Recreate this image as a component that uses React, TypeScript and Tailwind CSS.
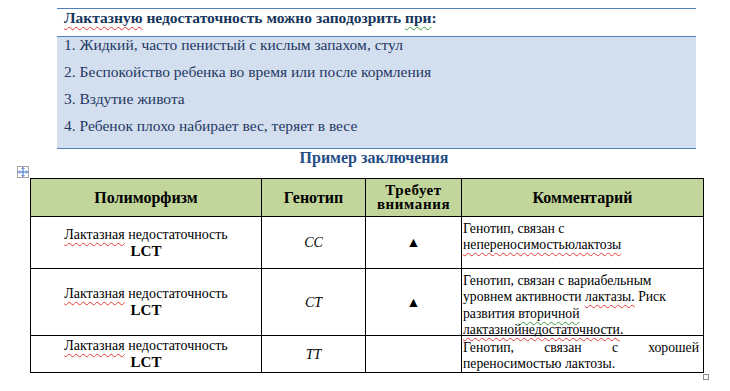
import React from 'react';

const spell = 'underline decoration-wavy decoration-[#e53935] decoration-1 underline-offset-[3px]';
const grammar = 'underline decoration-wavy decoration-[#3aa03a] decoration-1 underline-offset-[3px]';

const symptoms = [
  '1. Жидкий, часто пенистый с кислым запахом, стул',
  '2. Беспокойство ребенка во время или после кормления',
  '3. Вздутие живота',
  '4. Ребенок плохо набирает вес, теряет в весе',
];

const MoveHandle = () => (
  <div className="absolute -left-[13px] -top-[12px] flex size-[12px] items-center justify-center border border-[#a6a6a6] bg-white">
    <svg width="10" height="10" viewBox="0 0 10 10" fill="none" stroke="#3b6fc4" strokeWidth="1">
      <path d="M5 0.5v9M0.5 5h9" />
      <path d="M3.5 2 5 0.5 6.5 2M3.5 8 5 9.5 6.5 8M2 3.5 0.5 5 2 6.5M8 3.5 9.5 5 8 6.5" />
    </svg>
  </div>
);

const LctCell = () => (
  <div className="flex h-full flex-col items-center justify-center border-l border-t border-black leading-[16px] text-black">
    <span className="text-[14px]">
      <span className={spell}>Лактазная</span> недостаточность
    </span>
    <span className="text-[15px] font-bold">LCT</span>
  </div>
);

const CenterCell = ({ children, italic }: { children?: React.ReactNode; italic?: boolean }) => (
  <div
    className={`flex h-full items-center justify-center border-l border-t border-black text-[14px] text-black ${
      italic ? 'italic' : ''
    }`}
  >
    {children}
  </div>
);

const CommentCell = ({ children }: { children: React.ReactNode }) => (
  <div className="h-full border-l border-t border-black pl-[1px] pr-[4px] pt-[4px] text-[13.7px] leading-[16.4px] whitespace-nowrap text-black">
    {children}
  </div>
);

export default function App() {
  return (
    <div className="relative h-[391px] w-[730px] overflow-hidden bg-white [font-family:'Liberation_Serif','Times_New_Roman',serif]">
      <div className="ml-[57px] mt-[8px] w-[639px]">
        <div className="h-[29px] border-y border-[#4f81bd] pl-[7px] text-[15.5px] font-bold leading-[18px] text-[#17365d]">
          <span className={spell}>Лактазную</span> недостаточность можно заподозрить{' '}
          <span className={grammar}>при</span>:
        </div>
        <div className="border-b border-[#4f81bd] bg-[#d3dfee] pb-[3px] pl-[7px] text-[15.5px] leading-[16px] text-[#1f3864]">
          {symptoms.map((item) => (
            <div key={item} className="h-[27px]">
              {item}
            </div>
          ))}
        </div>
      </div>

      <div className="h-[29px] pl-[18px] text-center text-[16px] font-bold leading-[18px] text-[#264d85]">
        Пример заключения
      </div>

      <div className="relative ml-[30px] w-[674px] border-b border-r border-black">
        <MoveHandle />
        <div className="grid grid-cols-[231px_104px_96px_242px] grid-rows-[38px_52px_67px_37px]">
          <div className="flex items-center justify-center border-l border-t border-black bg-[#c2d69b] text-[16px] font-bold text-black">
            Полиморфизм
          </div>
          <div className="flex items-center justify-center border-l border-t border-black bg-[#c2d69b] text-[16px] font-bold text-black">
            Генотип
          </div>
          <div className="flex flex-col items-center justify-center border-l border-t border-black bg-[#c2d69b] pb-[2px] text-[15px] font-bold leading-[14px] tracking-[0.6px] text-black">
            <span>Требует</span>
            <span>внимания</span>
          </div>
          <div className="flex items-center justify-center border-l border-t border-black bg-[#c2d69b] text-[16px] font-bold text-black">
            Комментарий
          </div>

          <LctCell />
          <CenterCell italic>CC</CenterCell>
          <CenterCell>
            <span className="text-[14px]">▲</span>
          </CenterCell>
          <CommentCell>
            Генотип, связан с
            <br />
            <span className={spell}>непереносимостьюлактозы</span>
          </CommentCell>

          <LctCell />
          <CenterCell italic>CT</CenterCell>
          <CenterCell>
            <span className="text-[14px]">▲</span>
          </CenterCell>
          <CommentCell>
            Генотип, связан с вариабельным
            <br />
            уровнем активности <span className={spell}>лактазы.</span> Риск
            <br />
            развития <span className={grammar}>вторичной</span>
            <br />
            <span className={spell}>лактазнойнедостаточности</span>.
          </CommentCell>

          <LctCell />
          <CenterCell italic>TT</CenterCell>
          <CenterCell />
          <CommentCell>
            <div className="flex justify-between">
              <span>Генотип,</span>
              <span>связан</span>
              <span>с</span>
              <span>хорошей</span>
            </div>
            переносимостью лактозы.
          </CommentCell>
        </div>
        <div className="absolute -bottom-[8px] -right-[6px] size-[6px] border border-[#8c8c8c] bg-white" />
      </div>
    </div>
  );
}
